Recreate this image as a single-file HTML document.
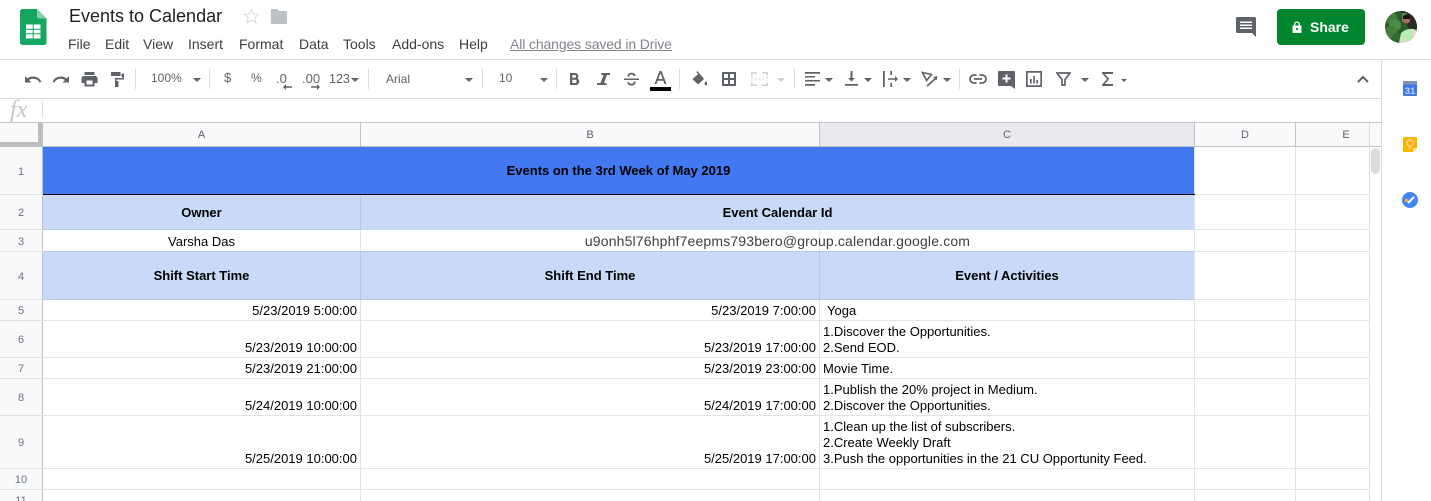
<!DOCTYPE html>
<html><head><meta charset="utf-8"><style>
html,body{margin:0;padding:0;background:#fff}
#p{position:relative;width:1431px;height:501px;overflow:hidden;font-family:"Liberation Sans",Arial,sans-serif;color:#000;background:#fff}
#p div,#p svg{position:absolute}
.t{white-space:pre;line-height:16px;font-size:13px}
.r{text-align:right}
.c{text-align:center}
.b{font-weight:bold}
.m{top:35px;font-size:14px;line-height:18px;color:#3c4043;white-space:pre}
.h{background:#dadce0}
.g{background:#e2e3e3}
.rh{left:0;width:42px;text-align:center;font-size:11px;line-height:14px;color:#6f7377}
.ch{top:128px;font-size:11px;line-height:14px;color:#5f6368;text-align:center}
.tb{color:#5f6368;font-size:12px;line-height:14px;white-space:pre}
.sep{top:69px;width:1px;height:20px;background:#dadce0}
.tri{width:0;height:0;border-left:4px solid transparent;border-right:4px solid transparent;border-top:4px solid #5f6368}
</style></head><body><div id="p">

<!-- logo -->
<svg style="left:20px;top:9px" width="27" height="36" viewBox="0 0 27 36"><path d="M2.500 0H17l9.500 9.500V33.500a2.500 2.500 0 0 1-2.500 2.500H2.500A2.500 2.500 0 0 1 0 33.500V2.500A2.500 2.500 0 0 1 2.500 0z" fill="#15a660"/><path d="M17 0l9.500 9.500H19a2 2 0 0 1-2-2z" fill="#87ceac"/><rect x="6" y="15.500" width="14.500" height="14" fill="#fff"/><path d="M6 19.700h14.500v1H6zM6 24.200h14.500v1H6zM12.700 15.500h1v14h-1z" fill="#15a660"/></svg>

<div class="t" style="left:69px;top:5px;font-size:18px;line-height:22px;color:#1f1f1f">Events to Calendar</div>
<svg style="left:242px;top:7px" width="19" height="18" viewBox="0 0 24 24"><path d="M12 3l2.700 6.300 6.800.6-5.200 4.500 1.600 6.700L12 17.500l-5.900 3.600 1.600-6.700L2.500 9.900l6.800-.6z" fill="none" stroke="#dadce0" stroke-width="1.400"/></svg>
<svg style="left:270px;top:9px" width="18" height="15" viewBox="0 0 18 15"><path d="M1.500 0H7l2 2h7.500A1.500 1.500 0 0 1 18 3.500v10a1.500 1.500 0 0 1-1.500 1.500h-15A1.500 1.500 0 0 1 0 13.500v-12A1.500 1.500 0 0 1 1.500 0z" fill="#bdc1c6" transform="scale(.9 1) translate(1 0)"/></svg>

<div class="m" style="left:68px">File</div>
<div class="m" style="left:105px">Edit</div>
<div class="m" style="left:143px">View</div>
<div class="m" style="left:188px">Insert</div>
<div class="m" style="left:239px">Format</div>
<div class="m" style="left:299px">Data</div>
<div class="m" style="left:343px">Tools</div>
<div class="m" style="left:392px">Add-ons</div>
<div class="m" style="left:459px">Help</div>
<div class="m" style="left:510px;color:#80868b;text-decoration:underline;letter-spacing:-.12px">All changes saved in Drive</div>

<svg style="left:1236px;top:17px" width="20" height="20" viewBox="0 0 20 20"><path d="M1.500 0h17A1.500 1.500 0 0 1 20 1.500V20l-4-4H1.500A1.500 1.500 0 0 1 0 14.500v-13A1.500 1.500 0 0 1 1.500 0z" fill="#5f6368"/><path d="M4 4.500h12v1.500H4zM4 7.500h12v1.500H4zM4 10.500h12v1.500H4z" fill="#fff"/></svg>
<div style="left:1277px;top:9px;width:88px;height:36px;background:#00852f;border-radius:4px"></div>
<svg style="left:1291px;top:21px" width="12" height="12" viewBox="0 0 12 12"><path d="M2 5h8v6.500H2z" fill="#fff" stroke="#fff" stroke-linejoin="round"/><path d="M3.700 5V3.300a2.300 2.300 0 0 1 4.600 0V5" fill="none" stroke="#fff" stroke-width="1.300"/><circle cx="6" cy="8" r="1.100" fill="#00852f"/></svg>
<div class="t b" style="left:1310px;top:19px;font-size:14px;color:#fff;line-height:16px">Share</div>
<svg style="left:1385px;top:11px" width="32" height="32" viewBox="0 0 32 32"><defs><clipPath id="a"><circle cx="16" cy="16" r="16"/></clipPath></defs><g clip-path="url(#a)"><rect width="32" height="32" fill="#2e5a2c"/><circle cx="6" cy="7" r="6" fill="#3f7d38"/><circle cx="10" cy="14" r="6" fill="#4a8c42"/><circle cx="6" cy="21" r="6" fill="#417f3a"/><circle cx="12" cy="27" r="5" fill="#35682f"/><path d="M16 0h16v18H24z" fill="#2a2a24"/><rect x="17" y="2" width="5" height="9" fill="#5d8a55"/><circle cx="21.500" cy="9" r="3.600" fill="#a87058"/><path d="M18 5q3.500-3 7 0v3h-7z" fill="#1a1614"/><path d="M14 32l2-10q5-5 13-4l3 2v12z" fill="#b4eeb0"/><path d="M16 32l3-8 3 8z" fill="#ecd8c8"/><path d="M27 18l5 3v6l-5-2z" fill="#e8d8c8"/></g></svg>

<!-- borders of toolbar -->
<div class="h" style="left:0;top:59px;width:1431px;height:1px"></div>
<div class="h" style="left:0;top:98px;width:1381px;height:1px"></div>
<div style="left:0;top:122px;width:1381px;height:1px;background:#c8c9ca"></div>
<div class="h" style="left:1381px;top:60px;width:1px;height:441px"></div>

<!-- toolbar -->
<svg style="left:24px;top:72px" width="18" height="14" viewBox="0 0 18 14"><path d="M9.300 4.500C6.900 4.500 5 5.200 3.400 6.400L1 4.300v6.200h6.500L5 8c1.200-.8 2.700-1.300 4.300-1.300 2.900 0 5.300 1.400 6.300 3.800l1.700-.7C16.100 6.600 13.200 4.500 9.300 4.500z" fill="#5f6368"/></svg>
<svg style="left:52px;top:72px" width="18" height="14" viewBox="0 0 18 14"><path d="M8.700 4.500c2.400 0 4.300.7 5.900 1.900L17 4.300v6.200h-6.500L13 8c-1.200-.8-2.700-1.300-4.300-1.300-2.900 0-5.300 1.400-6.300 3.800L.7 9.800C1.900 6.600 4.800 4.500 8.700 4.500z" fill="#5f6368"/></svg>
<svg style="left:81px;top:72px" width="17" height="15" viewBox="0 0 17 15"><path d="M14 4H3a2.500 2.500 0 0 0-2.500 2.500V11H3.500v3.500h10V11H16.500V6.500A2.500 2.500 0 0 0 14 4zM11.500 12.500h-6v-4h6zM13.500 0h-10v3h10z" fill="#5f6368"/></svg>
<svg style="left:110px;top:71px" width="15" height="16" viewBox="0 0 15 16"><path d="M1 1h9.500v4H1zM11.500 2.500h2.500v6H6.500V10H8.500v6H5V7h7.500V6h-1z" fill="#5f6368"/></svg>
<div class="sep" style="left:135px"></div>
<div class="tb" style="left:151px;top:71px">100%</div>
<div class="tri" style="left:193px;top:78px"></div>
<div class="sep" style="left:209px"></div>
<div class="tb" style="left:224px;top:71px;font-size:13px">$</div>
<div class="tb" style="left:251px;top:71px">%</div>
<div class="tb" style="left:276px;top:72px;font-size:13px">.0</div>
<svg style="left:283px;top:84px" width="9" height="6" viewBox="0 0 9 6"><path d="M9 2.300H3V0L0 3l3 3V3.700h6z" fill="#5f6368"/></svg>
<div class="tb" style="left:302px;top:72px;font-size:13px">.00</div>
<svg style="left:311px;top:84px" width="9" height="6" viewBox="0 0 9 6"><path d="M0 2.300h6V0l3 3-3 3V3.700H0z" fill="#5f6368"/></svg>
<div class="tb" style="left:329px;top:72px;font-size:12.500px">123</div>
<div class="tri" style="left:351px;top:78px"></div>
<div class="sep" style="left:368px"></div>
<div class="tb" style="left:386px;top:72px">Arial</div>
<div class="tri" style="left:465px;top:78px"></div>
<div class="sep" style="left:482px"></div>
<div class="tb" style="left:499px;top:71px">10</div>
<div class="tri" style="left:540px;top:78px"></div>
<div class="sep" style="left:556px"></div>
<svg style="left:569px;top:72px" width="11" height="14" viewBox="0 0 11 14"><path d="M1 1h5a3.300 3.300 0 0 1 2.500 5.500A3.500 3.500 0 0 1 6.500 13H1zM3.300 3v2.800H5.700a1.400 1.400 0 0 0 0-2.800zM3.300 7.800V11H6a1.600 1.600 0 0 0 0-3.200z" fill="#5f6368" fill-rule="evenodd"/></svg>
<svg style="left:597px;top:73px" width="13" height="12" viewBox="0 0 13 12"><path d="M4.500 0H13v2h-3L7 10h2.500v2H0v-2h3.500L6.500 2H4z" fill="#5f6368"/></svg>
<svg style="left:624px;top:72px" width="15" height="14" viewBox="0 0 15 14"><path d="M0 6.500h15V8H0zM3.500 4.500V4C3.500 2 5.300.8 7.500.8c2.300 0 4 1.200 4 3.200H9.600C9.600 3 8.700 2.500 7.500 2.500 6.300 2.500 5.400 3.100 5.400 4c0 .2 0 .3.100.5zM9.500 9.500H11.500c.1.300.1.500.1.800 0 2-1.800 3.200-4.100 3.200-2.400 0-4.200-1.300-4.200-3.300h1.900c0 1 1 1.600 2.300 1.600 1.200 0 2.100-.5 2.100-1.500 0-.3 0-.5-.2-.8z" fill="#5f6368"/></svg>
<svg style="left:653px;top:71px" width="15" height="13" viewBox="0 0 15 13"><path d="M6.500 0h2L13.500 13h-2l-1.200-3.300H4.700L3.500 13h-2zM5.300 8h4.400L7.500 2.200z" fill="#5f6368"/></svg>
<div style="left:650px;top:87px;width:21px;height:4px;background:#000"></div>
<div class="sep" style="left:679px"></div>
<svg style="left:691px;top:71px" width="16" height="15" viewBox="0 0 16 15"><path d="M6.500 0L5.300 1.200 7.200 3 1.500 8 7 13.500 13 8zM15 10s-1.500 1.800-1.500 2.800a1.500 1.500 0 0 0 3 0c0-1-1.500-2.800-1.500-2.800z" fill="#5f6368"/></svg>
<svg style="left:722px;top:72px" width="14" height="14" viewBox="0 0 14 14"><path d="M0 0h14v14H0zM2 2v4h4V2zM8 2v4h4V2zM2 8v4h4V8zM8 8v4h4V8z" fill="#5f6368" fill-rule="evenodd"/></svg>
<svg style="left:751px;top:72px" width="17" height="14" viewBox="0 0 17 14" fill="#cfd0d2"><path d="M0 0h6v1.500H1.500V3.500H0zM11 0h6v3.500h-1.500V1.500H11zM0 10.500h1.500v2H6V14H0zM15.500 10.500H17V14h-6v-1.500h4.500zM0 5h2v1H0zM0 7.500h2v1H0zM4 6l2 1-2 1zM13 6v2l-2-1zM7.500 6.500h2v1h-2zM15 5h2v1h-2zM15 7.500h2v1h-2z"/></svg>
<div class="tri" style="left:777px;top:78px;border-top-color:#cfd0d2"></div>
<div class="sep" style="left:794px"></div>

<svg style="left:805px;top:72px" width="15" height="14" viewBox="0 0 15 14" fill="#5f6368"><path d="M0 0h15v1.700H0zM0 4h10v1.500H0zM0 8h15v1.500H0zM0 12h10v1.700H0z"/></svg>
<div class="tri" style="left:825px;top:78px"></div>
<svg style="left:845px;top:71px" width="13" height="15" viewBox="0 0 13 15" fill="#5f6368"><path d="M0 13h13v1.700H0zM5.500 0h2v7H10L6.500 10.500 3 7h2.500z"/></svg>
<div class="tri" style="left:864px;top:78px"></div>
<svg style="left:883px;top:71px" width="15" height="16" viewBox="0 0 15 16" fill="#5f6368"><path d="M0 0h1.800v16H0zM7.300 0h1.700v4H7.300zM7.300 12h1.700v4H7.300zM5 7.200h7V5l3 3-3 3V8.800H5z"/></svg>
<div class="tri" style="left:903px;top:78px"></div>
<svg style="left:921px;top:71px" width="17" height="16" viewBox="0 0 17 16"><path d="M1.500 1.500l9 2-5 6z" fill="none" stroke="#5f6368" stroke-width="1.600"/><path d="M6 15l8.500-7.500" stroke="#5f6368" stroke-width="1.800"/><path d="M16.500 5l-1 4.500-3.200-3.500z" fill="#5f6368"/></svg>
<div class="tri" style="left:943px;top:78px"></div>
<div class="sep" style="left:959px"></div>
<svg style="left:969px;top:74px" width="18" height="10" viewBox="0 0 18 10"><path d="M7.500 1H5a4 4 0 0 0 0 8h2.500M10.500 1H13a4 4 0 0 1 0 8h-2.500M5 5h8" fill="none" stroke="#5f6368" stroke-width="1.800"/></svg>
<svg style="left:998px;top:71px" width="17" height="18" viewBox="0 0 17 18"><path d="M1 0h15a1 1 0 0 1 1 1v17l-4-3H1a1 1 0 0 1-1-1V1a1 1 0 0 1 1-1z" fill="#5f6368"/><path d="M7.500 3.500h2v3h3v2h-3v3h-2v-3h-3v-2h3z" fill="#fff"/></svg>
<svg style="left:1026px;top:71px" width="16" height="16" viewBox="0 0 16 16" fill="#5f6368"><path d="M0 0h16v16H0zM1.700 1.700v12.600h12.600V1.700zM4 8h1.700v4.500H4zM7.200 5h1.700v7.500H7.200zM10.300 9h1.700v3.500h-1.700z" fill-rule="evenodd"/></svg>
<svg style="left:1056px;top:72px" width="15" height="14" viewBox="0 0 15 14"><path d="M1 1h13L9 7.500V13H6V7.500z" fill="none" stroke="#5f6368" stroke-width="1.700"/></svg>
<div class="tri" style="left:1081px;top:78px"></div>
<svg style="left:1102px;top:72px" width="11" height="14" viewBox="0 0 11 14"><path d="M11 2V0H0v1.300L5 7 0 12.700V14h11v-2H2.800L7.300 7 2.800 2z" fill="#5f6368"/></svg>
<div class="tri" style="left:1121px;top:79px;border-width:3px 3px 0 3px;border-left-color:transparent;border-right-color:transparent"></div>
<svg style="left:1357px;top:75px" width="12" height="8" viewBox="0 0 12 8"><path d="M1 7l5-5 5 5" fill="none" stroke="#5f6368" stroke-width="2"/></svg>

<!-- fx -->
<div style="left:10px;top:98px;font-family:'Liberation Serif',serif;font-style:italic;font-size:24px;line-height:24px;color:#c4c7ca">fx</div>
<div class="h" style="left:42px;top:102px;width:1px;height:16px"></div>

<!-- side panel -->
<svg style="left:1403px;top:81px" width="14" height="15" viewBox="0 0 14 15"><rect width="14" height="15" rx="1" fill="#3f78e8"/><rect width="14" height="3.500" fill="#8294b4"/><text x="7" y="13" font-size="9.500" font-weight="bold" font-family="Liberation Sans" fill="#c3d6f8" text-anchor="middle">31</text></svg>
<svg style="left:1403px;top:137px" width="14" height="15" viewBox="0 0 14 15"><path d="M1 0h12a1 1 0 0 1 1 1v10l-4 4H1a1 1 0 0 1-1-1V1a1 1 0 0 1 1-1z" fill="#fbb400"/><path d="M14 11h-3a1 1 0 0 0-1 1v3z" fill="#fde08a"/><circle cx="7" cy="6" r="3.200" fill="none" stroke="#ffeab0" stroke-width="1"/><path d="M5.500 11h3" stroke="#ffeab0"/></svg>
<svg style="left:1402px;top:192px" width="16" height="16" viewBox="0 0 16 16"><circle cx="8" cy="8" r="8" fill="#4285f4"/><path d="M6 11l6-6" stroke="#fff" stroke-width="2.200"/><circle cx="4.300" cy="8.500" r="1.600" fill="#fbbc04"/></svg>

<!-- grid base -->
<div style="left:0;top:123px;width:1381px;height:23px;background:#f8f9fa"></div>
<div style="left:0;top:147px;width:42px;height:354px;background:#f8f9fa"></div>
<div style="left:819px;top:123px;width:375px;height:23px;background:#e8eaed"></div>
<div style="left:38px;top:123px;width:4px;height:23px;background:#bdbdbd"></div>
<div style="left:0;top:142px;width:42px;height:4px;background:#bdbdbd"></div>
<div style="left:0;top:146px;width:1381px;height:1px;background:#c0c1c2"></div>
<div style="left:42px;top:123px;width:1px;height:378px;background:#c0c1c2"></div>
<div style="left:360px;top:123px;width:1px;height:23px;background:#c0c1c2"></div>
<div style="left:819px;top:123px;width:1px;height:23px;background:#c0c1c2"></div>
<div style="left:1194px;top:123px;width:1px;height:23px;background:#c0c1c2"></div>
<div style="left:1295px;top:123px;width:1px;height:23px;background:#c0c1c2"></div>
<div style="left:1369px;top:123px;width:1px;height:378px;background:#dadce0"></div>
<div style="left:1370px;top:147px;width:11px;height:354px;background:#fff"></div>
<div style="left:1371px;top:148px;width:9px;height:26px;border-radius:5px;background:#dadce0"></div>

<!-- h lines -->
<div class="g" style="left:0;top:194px;width:1369px;height:1px"></div>
<div class="g" style="left:0;top:229px;width:1369px;height:1px"></div>
<div class="g" style="left:0;top:251px;width:1369px;height:1px"></div>
<div class="g" style="left:0;top:299px;width:1369px;height:1px"></div>
<div class="g" style="left:0;top:320px;width:1369px;height:1px"></div>
<div class="g" style="left:0;top:357px;width:1369px;height:1px"></div>
<div class="g" style="left:0;top:378px;width:1369px;height:1px"></div>
<div class="g" style="left:0;top:415px;width:1369px;height:1px"></div>
<div class="g" style="left:0;top:468px;width:1369px;height:1px"></div>
<div class="g" style="left:0;top:489px;width:1369px;height:1px"></div>
<!-- v lines -->
<div class="g" style="left:360px;top:147px;width:1px;height:354px"></div>
<div class="g" style="left:819px;top:147px;width:1px;height:354px"></div>
<div class="g" style="left:1194px;top:147px;width:1px;height:354px"></div>
<div class="g" style="left:1295px;top:147px;width:1px;height:354px"></div>

<!-- fills -->
<div style="left:43px;top:147px;width:1151px;height:47px;background:#4279f0"></div>
<div style="left:43px;top:194px;width:1152px;height:1px;background:#000"></div>
<div style="left:43px;top:195px;width:1151px;height:35px;background:#c9daf8"></div>
<div style="left:43px;top:252px;width:1151px;height:48px;background:#c9daf8"></div>
<div style="left:43px;top:229px;width:317px;height:1px;background:#b7c8e8"></div>
<div style="left:360px;top:195px;width:1px;height:35px;background:#b7c8e8"></div>
<div style="left:43px;top:251px;width:1151px;height:1px;background:#b7c8e8"></div>
<div style="left:43px;top:299px;width:1151px;height:1px;background:#b7c8e8"></div>
<div style="left:360px;top:252px;width:1px;height:48px;background:#b7c8e8"></div>
<div style="left:819px;top:252px;width:1px;height:48px;background:#b7c8e8"></div>

<!-- col headers -->
<div class="ch" style="left:43px;width:317px">A</div>
<div class="ch" style="left:361px;width:458px">B</div>
<div class="ch" style="left:820px;width:374px">C</div>
<div class="ch" style="left:1195px;width:100px">D</div>
<div class="ch" style="left:1296px;width:100px">E</div>

<!-- row headers -->
<div class="rh" style="top:165px">1</div>
<div class="rh" style="top:206px">2</div>
<div class="rh" style="top:235px">3</div>
<div class="rh" style="top:270px">4</div>
<div class="rh" style="top:304px">5</div>
<div class="rh" style="top:333px">6</div>
<div class="rh" style="top:362px">7</div>
<div class="rh" style="top:391px">8</div>
<div class="rh" style="top:436px">9</div>
<div class="rh" style="top:473px">10</div>
<div class="rh" style="top:494px">11</div>

<!-- cells -->
<div class="t b c" style="left:43px;width:1151px;top:163px">Events on the 3rd Week of May 2019</div>
<div class="t b c" style="left:43px;width:317px;top:205px">Owner</div>
<div class="t b c" style="left:361px;width:833px;top:205px">Event Calendar Id</div>
<div class="t c" style="left:43px;width:317px;top:234px">Varsha Das</div>
<div class="t c" style="left:361px;width:833px;top:233px;font-size:14px;letter-spacing:.16px;color:#3c4043">u9onh5l76hphf7eepms793bero@group.calendar.google.com</div>
<div class="t b c" style="left:43px;width:317px;top:268px">Shift Start Time</div>
<div class="t b c" style="left:361px;width:458px;top:268px">Shift End Time</div>
<div class="t b c" style="left:820px;width:374px;top:268px">Event / Activities</div>

<div class="t r" style="left:43px;width:314px;top:303px">5/23/2019 5:00:00</div>
<div class="t r" style="left:361px;width:455px;top:303px">5/23/2019 7:00:00</div>
<div class="t" style="left:827px;top:303px">Yoga</div>

<div class="t r" style="left:43px;width:314px;top:340px">5/23/2019 10:00:00</div>
<div class="t r" style="left:361px;width:455px;top:340px">5/23/2019 17:00:00</div>
<div class="t" style="left:823px;top:324px">1.Discover the Opportunities.
2.Send EOD.</div>

<div class="t r" style="left:43px;width:314px;top:361px">5/23/2019 21:00:00</div>
<div class="t r" style="left:361px;width:455px;top:361px">5/23/2019 23:00:00</div>
<div class="t" style="left:823px;top:361px">Movie Time.</div>

<div class="t r" style="left:43px;width:314px;top:398px">5/24/2019 10:00:00</div>
<div class="t r" style="left:361px;width:455px;top:398px">5/24/2019 17:00:00</div>
<div class="t" style="left:823px;top:382px">1.Publish the 20% project in Medium.
2.Discover the Opportunities.</div>

<div class="t r" style="left:43px;width:314px;top:451px">5/25/2019 10:00:00</div>
<div class="t r" style="left:361px;width:455px;top:451px">5/25/2019 17:00:00</div>
<div class="t" style="left:823px;top:419px">1.Clean up the list of subscribers.
2.Create Weekly Draft
3.Push the opportunities in the 21 CU Opportunity Feed.</div>

</div></body></html>
